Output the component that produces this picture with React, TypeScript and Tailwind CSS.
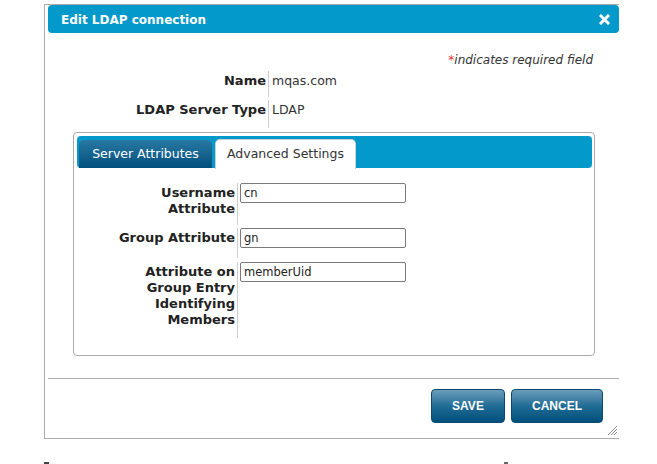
import React from "react";

const font = { fontFamily: '"DejaVu Sans", Verdana, sans-serif' };

function TopRow({ label, value, h }: { label: string; value: string; h: string }) {
  return (
    <div className={`flex ${h}`}>
      <div className="w-[224px] shrink-0 border-r border-[#cfcfcf] pr-[2px] pt-[2px] text-right text-[13px] font-bold leading-[16px] text-[#222]">
        {label}
      </div>
      <div className="pl-[3px] pt-[2px] text-[12.5px] leading-[16px] text-[#333]">{value}</div>
    </div>
  );
}

function FormRow({ label, value, h }: { label: React.ReactNode; value: string; h: string }) {
  return (
    <div className={`flex ${h}`}>
      <div className="w-[164px] shrink-0 border-r border-[#cfcfcf] pr-[2px] pt-[2px] text-right text-[13px] font-bold leading-[16px] text-[#222]">
        {label}
      </div>
      <div className="pl-[2px]">
        <input
          readOnly
          value={value}
          className="block h-[20px] w-[166px] rounded-[2px] border border-[#7a7a7a] bg-white px-[3px] text-[11.5px] text-[#222] outline-none"
          style={font}
        />
      </div>
    </div>
  );
}

export default function App() {
  return (
    <div className="h-[464px] w-[657px] overflow-hidden bg-white" style={font}>
      <div className="ml-[44px] mt-[4px] w-[575px] border-b border-l border-t border-[#ababab] bg-white">
        {/* header */}
        <div className="ml-[3px] flex h-[28px] items-center justify-between rounded-[4px] bg-[#0399cb] pl-[13px] pr-[9px] pt-[1px]">
          <span className="text-[12px] font-bold text-white">Edit LDAP connection</span>
          <svg width="11" height="11" viewBox="0 0 11 11">
            <path d="M2 2 L9 9 M9 2 L2 9" stroke="white" strokeWidth="3" strokeLinecap="square" />
          </svg>
        </div>

        <div className="mt-[19px] pr-[26px] text-right text-[12px] italic leading-[16px] text-[#333]">
          <span className="not-italic text-[#e8333a]">*</span>indicates required field
        </div>

        <div className="mt-[3px] flex flex-col gap-[3px]">
          <TopRow label="Name" value="mqas.com" h="h-[26px]" />
          <TopRow label="LDAP Server Type" value="LDAP" h="h-[28px]" />
        </div>

        {/* tab panel */}
        <div className="ml-[28px] mt-[4px] h-[224px] w-[522px] rounded-[4px] border border-[#ababab] p-[3px] pr-[2px]">
          <div className="flex h-[32px] items-end gap-[3px] rounded-[4px] bg-[#0399cb] pl-[2px]">
            <div className="flex h-[28px] w-[133px] items-center justify-center rounded-t-[5px] bg-gradient-to-b from-[#2878a4] to-[#004f7c] text-[12.5px] text-white">
              Server Attributes
            </div>
            <div className="-mb-[1px] flex h-[30px] w-[141px] items-center justify-center rounded-t-[5px] border border-b-0 border-[#cfcfcf] bg-white text-[12.5px] text-[#333]">
              Advanced Settings
            </div>
          </div>

          <div className="ml-[-3px] mt-[15px] flex flex-col">
            <FormRow
              label={
                <>
                  Username
                  <br />
                  Attribute
                </>
              }
              value="cn"
              h="h-[42px]"
            />
            <div className="h-[3px]" />
            <FormRow label="Group Attribute" value="gn" h="h-[30px]" />
            <div className="h-[4px]" />
            <FormRow
              label={
                <>
                  Attribute on
                  <br />
                  Group Entry
                  <br />
                  Identifying
                  <br />
                  Members
                </>
              }
              value="memberUid"
              h="h-[76px]"
            />
          </div>
        </div>

        <div className="ml-[3px] mt-[22px] border-t border-[#ababab]" />

        <div className="relative flex justify-end gap-[6px] pb-[15px] pr-[16px] pt-[10px]">
          <button
            className="h-[34px] w-[74px] rounded-[4px] border border-[#0b4a6e] bg-gradient-to-b from-[#6a9dbb] via-[#1f6c95] to-[#004f7c] text-[12px] font-bold text-white"
            style={{ fontFamily: '"Liberation Sans", Arial, sans-serif' }}
          >
            SAVE
          </button>
          <button
            className="h-[34px] w-[92px] rounded-[4px] border border-[#0b4a6e] bg-gradient-to-b from-[#6a9dbb] via-[#1f6c95] to-[#004f7c] text-[12px] font-bold text-white"
            style={{ fontFamily: '"Liberation Sans", Arial, sans-serif' }}
          >
            CANCEL
          </button>
          <svg className="absolute bottom-[2px] right-[1px]" width="12" height="12" viewBox="0 0 12 12">
            <path d="M11 2 L2 11 M11 5 L5 11 M11 8 L8 11" stroke="#8a8a8a" strokeWidth="1" />
          </svg>
        </div>
      </div>
      <div className="relative mt-[23px] h-[3px]">
        <div className="absolute left-[44px] top-0 h-[2px] w-[5px] bg-[#444]" />
        <div className="absolute left-[504px] top-0 h-[2px] w-[4px] bg-[#666]" />
      </div>
    </div>
  );
}
